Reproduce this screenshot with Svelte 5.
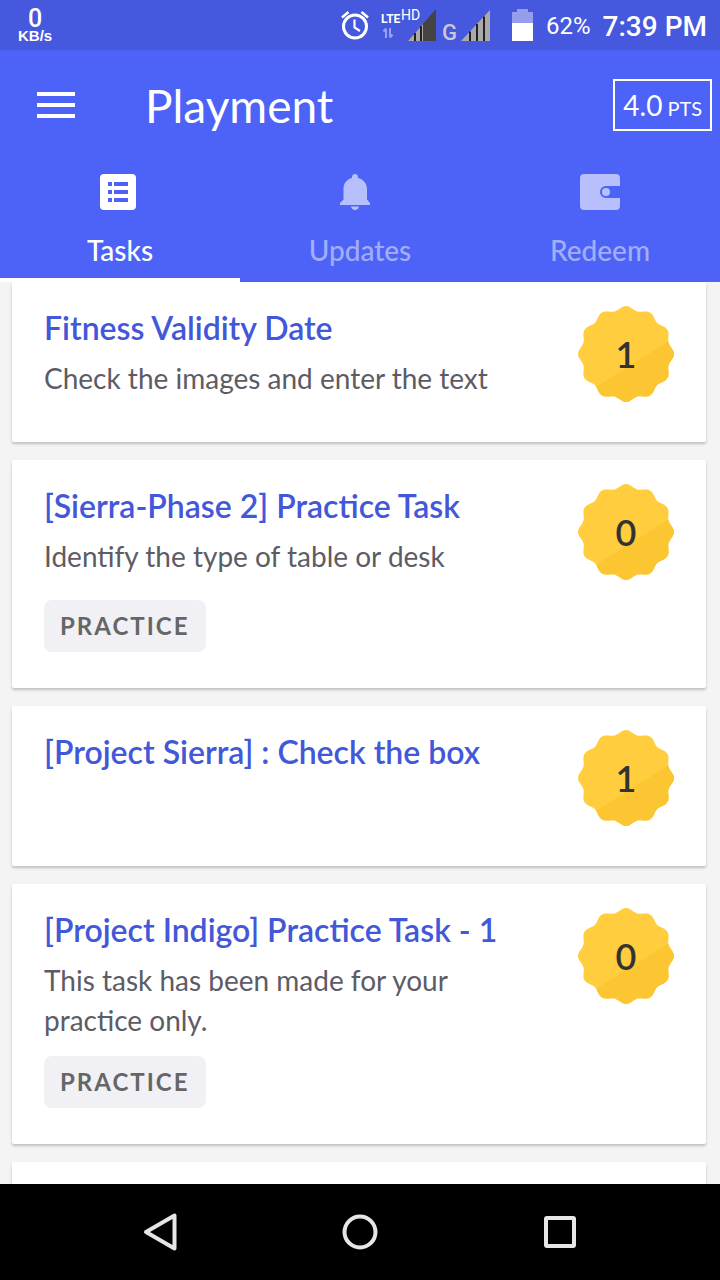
<script>
  let active = $state('tasks');

  const tabs = [
    { id: 'tasks', label: 'Tasks' },
    { id: 'updates', label: 'Updates' },
    { id: 'redeem', label: 'Redeem' }
  ];

  const tasks = [
    { title: 'Fitness Validity Date', text: 'Check the images and enter the text', points: 1 },
    { title: '[Sierra-Phase 2] Practice Task', text: 'Identify the type of table or desk', points: 0, practice: true },
    { title: '[Project Sierra] : Check the box', points: 1 },
    { title: '[Project Indigo] Practice Task - 1', text: 'This task has been made for your practice only.', points: 0, practice: true }
  ];

  // scalloped edge with twelve lobes
  const seal = Array.from({ length: 180 }, (_, i) => {
    const a = (i * Math.PI) / 90;
    const r = 46 + 2 * Math.cos(12 * a);
    return `${(48 + r * Math.cos(a)).toFixed(2)},${(48 + r * Math.sin(a)).toFixed(2)}`;
  }).join(' ');
</script>

<div class="app">
  <div class="status">
    <div class="speed">
      <span class="speed__value">0</span>
      <span class="speed__unit">KB/s</span>
    </div>
    <div class="status__right">
      <svg class="alarm" viewBox="0 0 28 30" width="28" height="30" fill="none" stroke="#fff" aria-hidden="true">
        <circle cx="14" cy="16.500" r="11.500" stroke-width="3" />
        <path d="M1 7.500 7.500 2M27 7.500 20.500 2" stroke-width="2.600" />
        <path d="M13.500 9.500v8l5.500 3.500" stroke-width="2.200" />
      </svg>
      <svg class="signal" viewBox="0 -3 110 40" width="110" height="40" aria-hidden="true">
        <text class="lte" x="0" y="15">LTE</text>
        <text class="hd" x="20" y="12">HD</text>
        <path d="M5 30V21M2.500 23.500 5 20.500M9 20v9M11.500 26.500 9 29.500" fill="none" stroke="#98a2ec" stroke-width="2" />
        <path d="M27 33 55 1v32z" fill="#444" />
        <path d="M27 33 42 16v17z" fill="#aaa" />
        <path d="M34 25v8M40 18v15" stroke="#222" stroke-width="2" />
        <text class="net" x="61" y="32">G</text>
        <path d="M80 33 109 2v31z" fill="#aaa" />
        <path d="M89 23.500V33M96 16v17M103 8.500V33" stroke="#222" stroke-width="2" />
      </svg>
      <svg class="battery" viewBox="0 0 21 32" width="21" height="32" aria-hidden="true">
        <path d="M0 3h5V0h11v3h5v11H0z" fill="#949eeb" />
        <path d="M0 14h21v18H0z" fill="#fff" />
      </svg>
      <span class="percent">62%</span>
      <span class="clock">7:39 PM</span>
    </div>
  </div>

  <header class="header">
    <div class="bar">
      <button class="menu" type="button" aria-label="Menu">
        <svg viewBox="0 0 38 26" width="38" height="26" fill="#fff"><path d="M0 0h38v4H0zM0 11h38v4H0zM0 22h38v4H0z" /></svg>
      </button>
      <h1 class="bar__title">Playment</h1>
      <button class="points" type="button"><span>4.0</span> <small>PTS</small></button>
    </div>

    <nav class="tabs">
      {#each tabs as tab}
        <button class="tab" class:tab--active={active === tab.id} type="button" onclick={() => (active = tab.id)}>
          <svg viewBox="0 0 40 36" width="40" height="36" fill="currentColor" aria-hidden="true">
            {#if tab.id === 'tasks'}
              <path fill-rule="evenodd" d="M4 0h28a4 4 0 0 1 4 4v28a4 4 0 0 1-4 4H4a4 4 0 0 1-4-4V4a4 4 0 0 1 4-4zM8 8v4h4V8zM14 8v4h14V8zM8 16v4h4v-4zM14 16v4h14v-4zM8 24v4h4v-4zM14 24v4h14v-4z" />
            {:else if tab.id === 'updates'}
              <path d="M15 0c1.800 0 3 1.200 3 3v1c5.500 1.300 9 5.600 9 11v10.500l3 3.500v2H0v-2l3.500-3.500V15c0-5.400 3-9.700 8.500-11V3c0-1.800 1.200-3 3-3zM11 32.500h8c-.5 2.200-2 3.500-4 3.500s-3.500-1.300-4-3.500z" />
            {:else}
              <path d="M4 0h32a4 4 0 0 1 4 4v8H26a6 6 0 0 0 0 12h14v8a4 4 0 0 1-4 4H4a4 4 0 0 1-4-4V4a4 4 0 0 1 4-4z" />
              <circle cx="26" cy="18" r="4" />
            {/if}
          </svg>
          <span class="tab__label">{tab.label}</span>
        </button>
      {/each}
    </nav>
  </header>

  <main class="list">
    {#each tasks as task}
      <article class="card">
        <div class="card__head">
          <div class="card__info">
            <h2 class="card__title">{task.title}</h2>
            {#if task.text}
              <p class="card__text">{task.text}</p>
            {/if}
          </div>
          <div class="badge">
            <svg viewBox="0 0 96 96" width="96" height="96" aria-hidden="true">
              <clipPath id="lower"><path d="M0 92 96 32v64H0z" /></clipPath>
              <polygon points={seal} fill="#ffcd3e" />
              <polygon points={seal} fill="#fcc632" clip-path="url(#lower)" />
            </svg>
            <span class="badge__value">{task.points}</span>
          </div>
        </div>
        {#if task.practice}
          <span class="chip">PRACTICE</span>
        {/if}
      </article>
    {/each}
    <article class="card"></article>
  </main>

  <footer class="system">
    <button type="button" aria-label="Back">
      <svg viewBox="0 0 40 40" width="40" height="40"><path d="M34.500 3.500v33L6 20z" /></svg>
    </button>
    <button type="button" aria-label="Home">
      <svg viewBox="0 0 40 40" width="40" height="40"><circle cx="20" cy="20" r="15.500" /></svg>
    </button>
    <button type="button" aria-label="Recent apps">
      <svg viewBox="0 0 40 40" width="40" height="40"><rect x="6" y="6" width="28" height="28" rx="1" /></svg>
    </button>
  </footer>
</div>

<style>
  :global(body) {
    background: #f4f4f4;
  }

  .app {
    height: 100vh;
    display: flex;
    flex-direction: column;
    overflow: hidden;
    background: #f4f4f4;
    font-family: Lato, sans-serif;
  }

  button {
    appearance: none;
    border: 0;
    margin: 0;
    padding: 0;
    background: transparent;
    color: inherit;
    font: inherit;
    cursor: pointer;
  }

  svg {
    display: block;
  }

  .status {
    flex: none;
    height: 50px;
    display: flex;
    align-items: center;
    justify-content: space-between;
    padding: 0 13px 0 18px;
    background: #4658dd;
    color: #fff;
    font-family: Roboto, sans-serif;
  }

  .speed {
    display: flex;
    flex-direction: column;
    align-items: center;
    padding-top: 4px;
    font-family: 'Liberation Sans', Arial, sans-serif;
    font-weight: 700;
  }

  .speed__value {
    font-family: Roboto, sans-serif;
    font-size: 25px;
    font-weight: 500;
    line-height: 18px;
  }

  .speed__unit {
    font-size: 15px;
    line-height: 16px;
  }

  .status__right {
    display: flex;
    align-items: center;
  }

  .alarm {
    margin-right: 12px;
  }

  .signal {
    margin-right: 21px;
    fill: #fff;
  }

  .lte {
    font: 700 12px Roboto, sans-serif;
  }

  .hd {
    font: 400 14px Roboto, sans-serif;
  }

  .net {
    font: 500 22px Roboto, sans-serif;
    fill: #c9c9d2;
  }

  .battery {
    margin-right: 13px;
  }

  .percent {
    margin-right: 12px;
    padding-top: 2px;
    font-size: 24px;
  }

  .clock {
    padding-top: 2px;
    font-size: 28px;
    font-weight: 500;
  }

  .header {
    flex: none;
    background: #4d63f7;
    color: #fff;
  }

  .bar {
    height: 110px;
    display: flex;
    align-items: center;
    padding: 0 8px 0 37px;
  }

  .bar__title {
    flex: 1;
    margin: 0 0 0 70px;
    font-size: 46px;
    font-weight: 400;
  }

  .points {
    height: 52px;
    display: flex;
    align-items: baseline;
    gap: 5px;
    padding: 0 8px;
    border: 2px solid #fff;
    font-size: 28px;
    line-height: 48px;
    white-space: nowrap;
  }

  .points small {
    font-size: 20px;
  }

  .tabs {
    display: grid;
    grid-template-columns: repeat(3, 1fr);
  }

  .tab {
    height: 122px;
    display: flex;
    flex-direction: column;
    align-items: center;
    gap: 22px;
    padding-top: 14px;
    border-bottom: 4px solid transparent;
    color: #b7c0fc;
  }

  .tab__label {
    color: #a3aefa;
    font-size: 28px;
    font-weight: 500;
    line-height: 36px;
  }

  .tab--active {
    border-bottom-color: #fff;
    color: #fff;
  }

  .tab--active .tab__label {
    color: #fff;
  }

  .list {
    flex: 1;
    min-height: 0;
    display: flex;
    flex-direction: column;
    gap: 18px;
    padding: 0 14px 0 12px;
    overflow: hidden;
  }

  .card {
    flex: none;
    box-sizing: border-box;
    min-height: 160px;
    padding: 24px 32px 36px;
    background: #fff;
    border-radius: 2px;
    box-shadow: 0 2px 3px rgba(0, 0, 0, 0.22);
  }

  .card__head {
    display: flex;
    align-items: flex-start;
    gap: 44px;
  }

  .card__info {
    flex: 1;
  }

  .card__title {
    margin: 0 0 8px;
    color: #4357d9;
    font-size: 32px;
    font-weight: 600;
    line-height: 44px;
  }

  .card__text {
    margin: 0;
    color: #5c5c66;
    font-size: 28px;
    line-height: 40px;
  }

  .badge {
    position: relative;
    flex: none;
    margin-bottom: 4px;
  }

  .badge__value {
    position: absolute;
    inset: 0;
    display: grid;
    place-items: center;
    color: #333;
    font-size: 36px;
    font-weight: 600;
  }

  .chip {
    display: block;
    width: fit-content;
    margin-top: 16px;
    padding: 0 16px;
    border-radius: 8px;
    background: #f0f0f5;
    color: #666;
    font-size: 24px;
    font-weight: 700;
    letter-spacing: 2px;
    line-height: 52px;
  }

  .system {
    flex: none;
    height: 96px;
    display: flex;
    align-items: center;
    justify-content: center;
    gap: 160px;
    background: #000;
  }

  .system svg {
    fill: none;
    stroke: #e6e6e6;
    stroke-width: 4;
    stroke-linejoin: round;
  }
</style>
